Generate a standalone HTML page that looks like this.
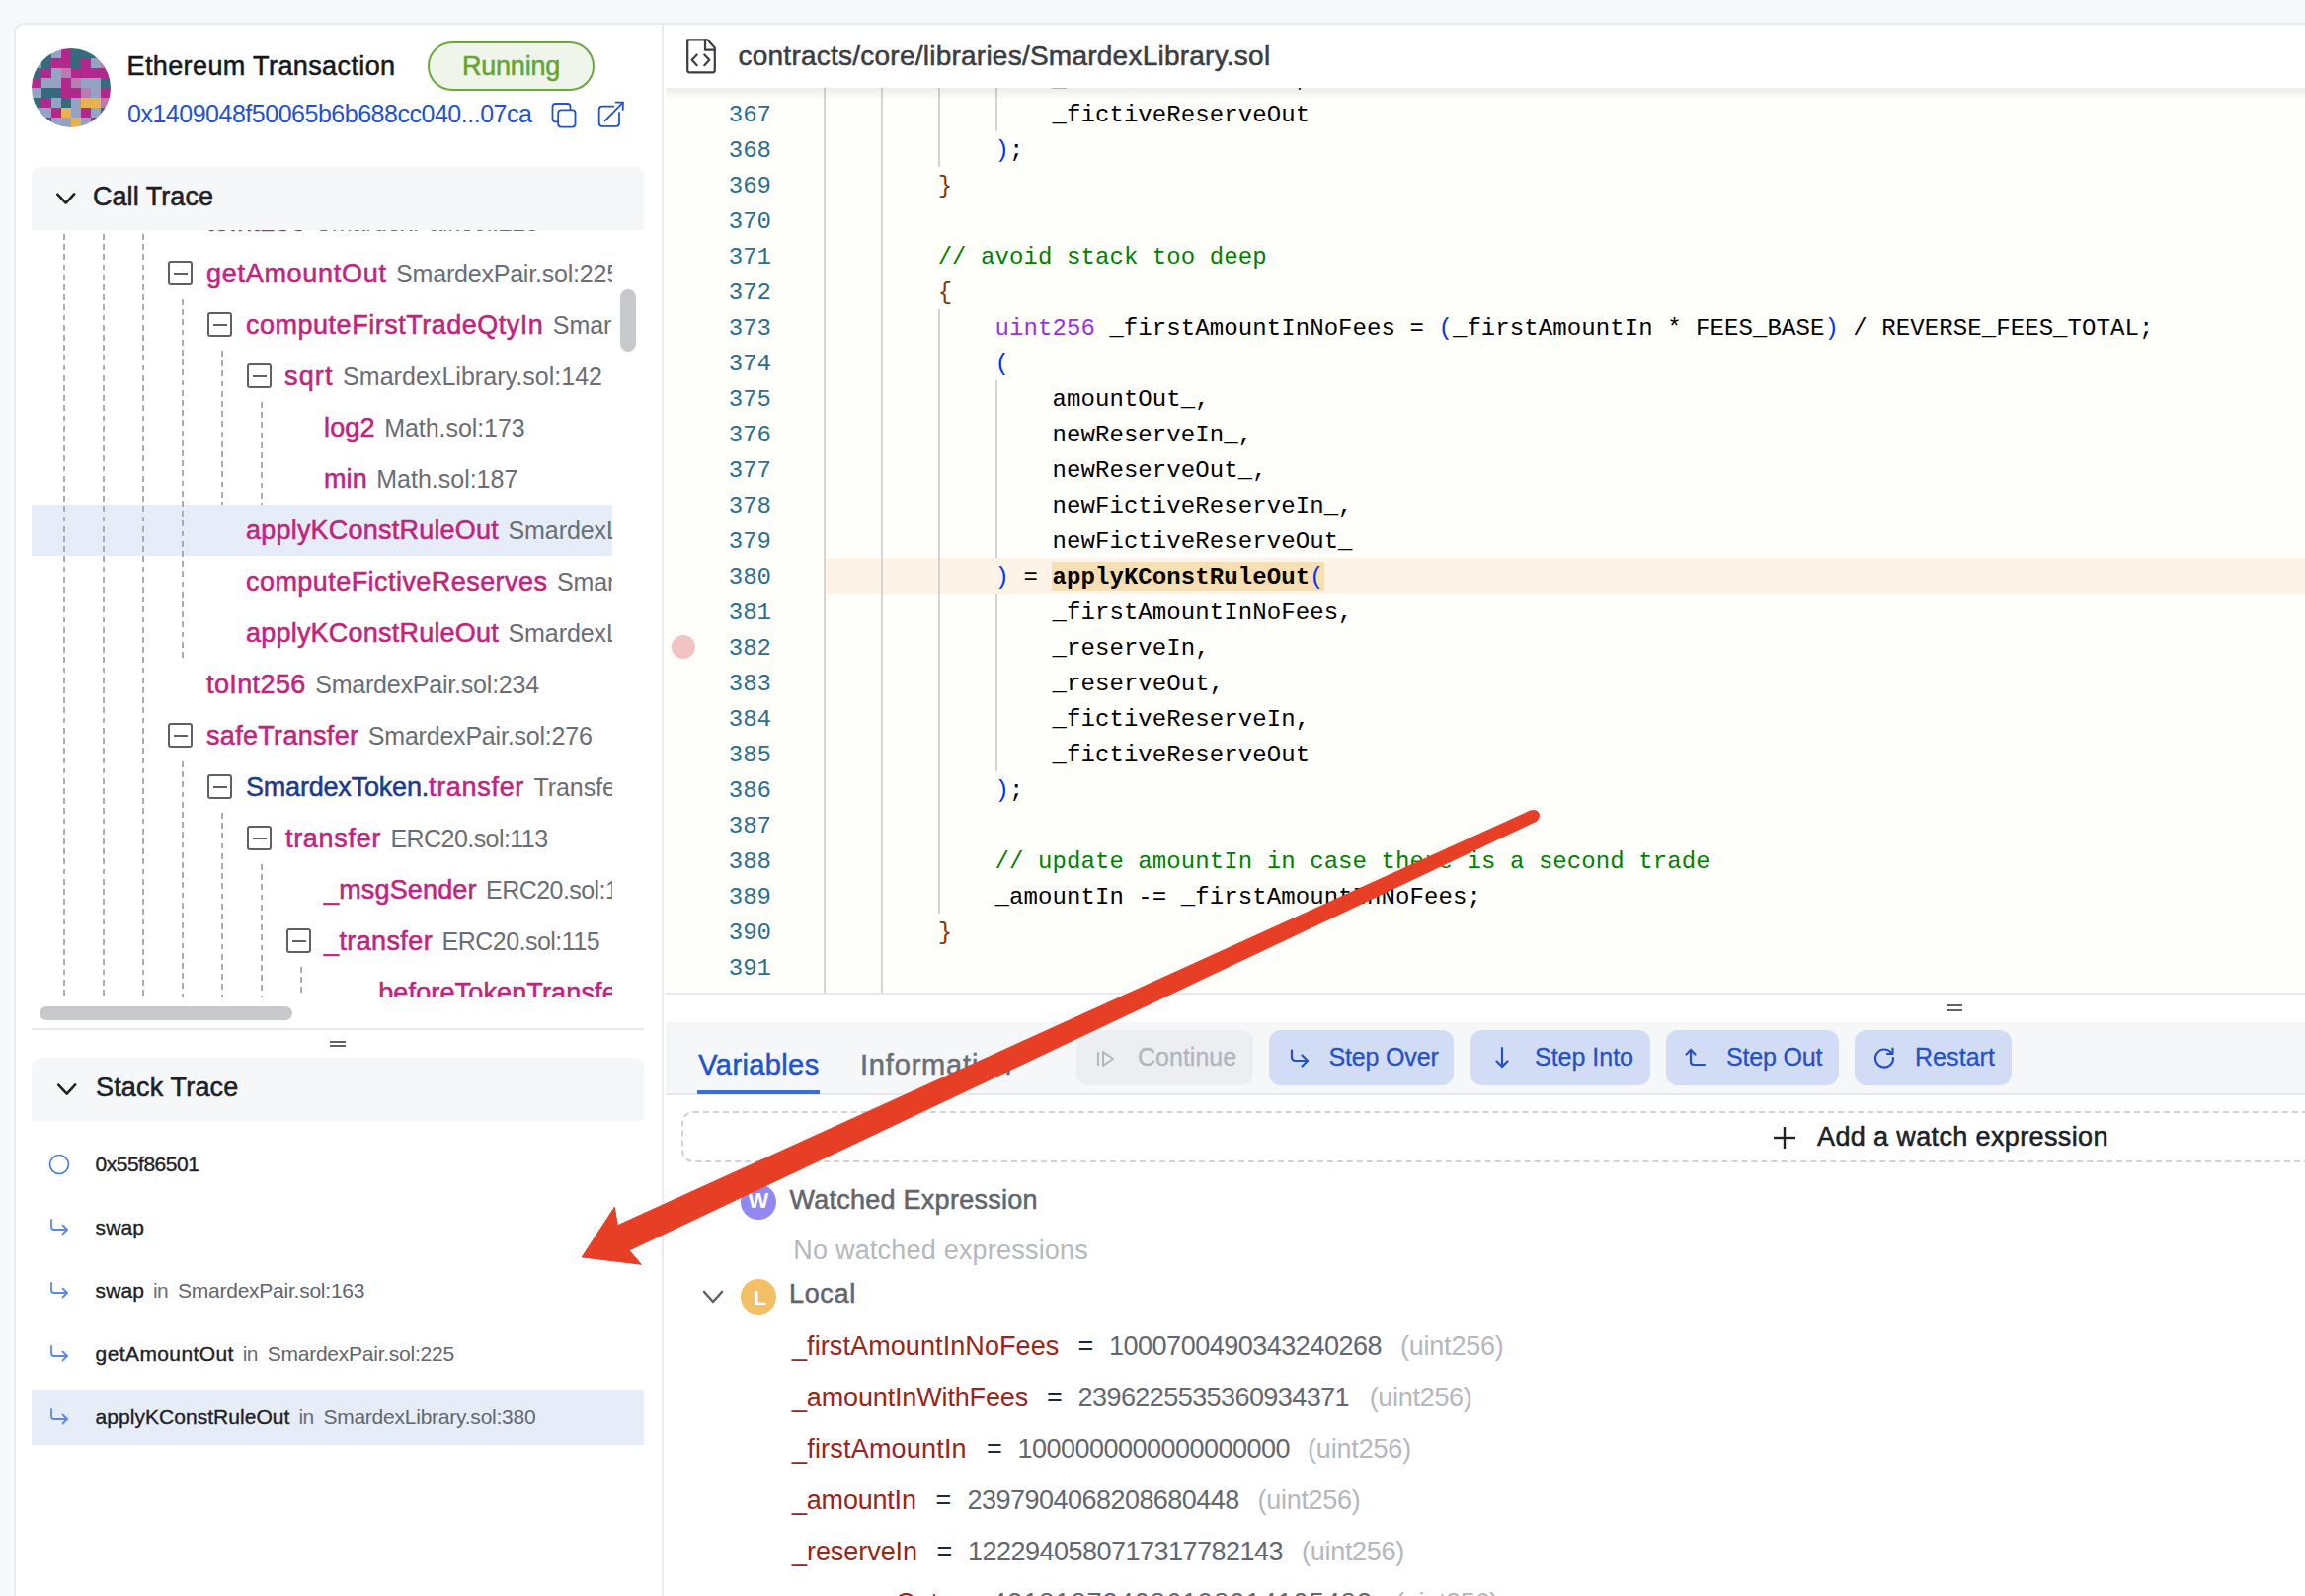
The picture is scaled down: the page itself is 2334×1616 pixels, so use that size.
<!DOCTYPE html><html><head><meta charset="utf-8"><title>Debugger</title><style>html,body{margin:0;padding:0;}body{width:2334px;height:1616px;overflow:hidden;position:relative;background:#f7f8fa;font-family:"Liberation Sans",sans-serif;}</style></head><body>
<div style="position:absolute;left:14px;top:23px;width:2400px;height:1700px;background:#ffffff;border:2px solid #e8ebf0;border-radius:10px;box-sizing:border-box;"></div>
<svg style="position:absolute;left:32px;top:49px" width="80" height="80" viewBox="0 0 80 80"><defs><clipPath id="av"><circle cx="40" cy="40" r="40"/></clipPath></defs><g clip-path="url(#av)"><rect x="0" y="0" width="10.5" height="10.5" fill="#94a3c4"/><rect x="10" y="0" width="10.5" height="10.5" fill="#356b7c"/><rect x="20" y="0" width="10.5" height="10.5" fill="#94a3c4"/><rect x="30" y="0" width="10.5" height="10.5" fill="#b3288c"/><rect x="40" y="0" width="10.5" height="10.5" fill="#356b7c"/><rect x="50" y="0" width="10.5" height="10.5" fill="#356b7c"/><rect x="60" y="0" width="10.5" height="10.5" fill="#356b7c"/><rect x="70" y="0" width="10.5" height="10.5" fill="#b97bb2"/><rect x="0" y="10" width="10.5" height="10.5" fill="#94a3c4"/><rect x="10" y="10" width="10.5" height="10.5" fill="#356b7c"/><rect x="20" y="10" width="10.5" height="10.5" fill="#b3288c"/><rect x="30" y="10" width="10.5" height="10.5" fill="#b3288c"/><rect x="40" y="10" width="10.5" height="10.5" fill="#356b7c"/><rect x="50" y="10" width="10.5" height="10.5" fill="#b3288c"/><rect x="60" y="10" width="10.5" height="10.5" fill="#94a3c4"/><rect x="70" y="10" width="10.5" height="10.5" fill="#b97bb2"/><rect x="0" y="20" width="10.5" height="10.5" fill="#356b7c"/><rect x="10" y="20" width="10.5" height="10.5" fill="#b3288c"/><rect x="20" y="20" width="10.5" height="10.5" fill="#94a3c4"/><rect x="30" y="20" width="10.5" height="10.5" fill="#b97bb2"/><rect x="40" y="20" width="10.5" height="10.5" fill="#b3288c"/><rect x="50" y="20" width="10.5" height="10.5" fill="#b3288c"/><rect x="60" y="20" width="10.5" height="10.5" fill="#b3288c"/><rect x="70" y="20" width="10.5" height="10.5" fill="#b3288c"/><rect x="0" y="30" width="10.5" height="10.5" fill="#b3288c"/><rect x="10" y="30" width="10.5" height="10.5" fill="#94a3c4"/><rect x="20" y="30" width="10.5" height="10.5" fill="#94a3c4"/><rect x="30" y="30" width="10.5" height="10.5" fill="#b3288c"/><rect x="40" y="30" width="10.5" height="10.5" fill="#b97bb2"/><rect x="50" y="30" width="10.5" height="10.5" fill="#94a3c4"/><rect x="60" y="30" width="10.5" height="10.5" fill="#94a3c4"/><rect x="70" y="30" width="10.5" height="10.5" fill="#356b7c"/><rect x="0" y="40" width="10.5" height="10.5" fill="#94a3c4"/><rect x="10" y="40" width="10.5" height="10.5" fill="#356b7c"/><rect x="20" y="40" width="10.5" height="10.5" fill="#356b7c"/><rect x="30" y="40" width="10.5" height="10.5" fill="#b3288c"/><rect x="40" y="40" width="10.5" height="10.5" fill="#b3288c"/><rect x="50" y="40" width="10.5" height="10.5" fill="#b97bb2"/><rect x="60" y="40" width="10.5" height="10.5" fill="#94a3c4"/><rect x="70" y="40" width="10.5" height="10.5" fill="#b3288c"/><rect x="0" y="50" width="10.5" height="10.5" fill="#356b7c"/><rect x="10" y="50" width="10.5" height="10.5" fill="#b3288c"/><rect x="20" y="50" width="10.5" height="10.5" fill="#94a3c4"/><rect x="30" y="50" width="10.5" height="10.5" fill="#356b7c"/><rect x="40" y="50" width="10.5" height="10.5" fill="#94a3c4"/><rect x="50" y="50" width="10.5" height="10.5" fill="#e8b04f"/><rect x="60" y="50" width="10.5" height="10.5" fill="#e8b04f"/><rect x="70" y="50" width="10.5" height="10.5" fill="#b97bb2"/><rect x="0" y="60" width="10.5" height="10.5" fill="#94a3c4"/><rect x="10" y="60" width="10.5" height="10.5" fill="#94a3c4"/><rect x="20" y="60" width="10.5" height="10.5" fill="#b3288c"/><rect x="30" y="60" width="10.5" height="10.5" fill="#e8b04f"/><rect x="40" y="60" width="10.5" height="10.5" fill="#94a3c4"/><rect x="50" y="60" width="10.5" height="10.5" fill="#b3288c"/><rect x="60" y="60" width="10.5" height="10.5" fill="#94a3c4"/><rect x="70" y="60" width="10.5" height="10.5" fill="#356b7c"/><rect x="0" y="70" width="10.5" height="10.5" fill="#94a3c4"/><rect x="10" y="70" width="10.5" height="10.5" fill="#356b7c"/><rect x="20" y="70" width="10.5" height="10.5" fill="#94a3c4"/><rect x="30" y="70" width="10.5" height="10.5" fill="#94a3c4"/><rect x="40" y="70" width="10.5" height="10.5" fill="#e8b04f"/><rect x="50" y="70" width="10.5" height="10.5" fill="#94a3c4"/><rect x="60" y="70" width="10.5" height="10.5" fill="#b3288c"/><rect x="70" y="70" width="10.5" height="10.5" fill="#94a3c4"/></g></svg>
<div style="position:absolute;left:128.50px;top:49.64px;font-size:27px;line-height:34px;font-family:'Liberation Sans', sans-serif;font-weight:400;color:#16181b;white-space:pre;-webkit-text-stroke:0.55px #16181b;letter-spacing:0.394px;">Ethereum Transaction</div>
<div style="position:absolute;left:433px;top:42px;width:169px;height:50px;box-sizing:border-box;border:2px solid #6ba93c;border-radius:25px;background:#eff5ea;"></div>
<div style="position:absolute;left:468.00px;top:49.64px;font-size:27px;line-height:34px;font-family:'Liberation Sans', sans-serif;font-weight:400;color:#65a632;white-space:pre;-webkit-text-stroke:0.55px #65a632;letter-spacing:-0.225px;">Running</div>
<div style="position:absolute;left:129.00px;top:99.03px;font-size:25px;line-height:32px;font-family:'Liberation Sans', sans-serif;font-weight:400;color:#2152d2;white-space:pre;letter-spacing:-0.484px;">0x1409048f50065b6b688cc040...07ca</div>
<svg style="position:absolute;left:557px;top:103px" width="30" height="30" viewBox="0 0 30 30" fill="none" stroke="#2152d2" stroke-width="1.8" stroke-linejoin="round"><path d="M8.2 20.3 H5.5 Q2.5 20.3 2.5 17.3 V5 Q2.5 2 5.5 2 H17.5 Q20.5 2 20.5 5 V8.3"/><rect x="8.2" y="8.3" width="17.3" height="17.3" rx="3"/></svg>
<svg style="position:absolute;left:604px;top:101px" width="30" height="30" viewBox="0 0 30 30" fill="none" stroke="#2152d2" stroke-width="1.8" stroke-linecap="round" stroke-linejoin="round"><path d="M17.3 6.7 H5.7 Q2.7 6.7 2.7 9.7 V23.8 Q2.7 26.8 5.7 26.8 H20 Q23 26.8 23 23.8 V13"/><path d="M8.6 21.3 L26.8 2.6"/><path d="M19.5 2.6 H26.8 V10.1"/></svg>
<div style="position:absolute;left:32px;top:169px;width:620px;height:64px;background:#f6f7f9;border-radius:9px 9px 0 0;"></div>
<svg style="position:absolute;left:55px;top:192px" width="24" height="18" viewBox="0 0 24 18" fill="none" stroke="#1d2025" stroke-width="2.6" stroke-linecap="round" stroke-linejoin="round"><path d="M3.2 4.6 L11.7 13.6 L20.2 4.4"/></svg>
<div style="position:absolute;left:94.00px;top:181.64px;font-size:27px;line-height:34px;font-family:'Liberation Sans', sans-serif;font-weight:400;color:#1d2025;white-space:pre;-webkit-text-stroke:0.55px #1d2025;letter-spacing:0.045px;">Call Trace</div>
<div style="position:absolute;left:32px;top:233px;width:588px;height:777px;overflow:hidden;">
<div style="position:absolute;left:0px;top:278px;width:588px;height:52px;background:#e7edf8;"></div>
<div style="position:absolute;left:32px;top:4px;width:2px;height:773px;background:repeating-linear-gradient(to bottom,#aaaeb4 0px,#aaaeb4 5.8px,transparent 5.8px,transparent 10.2px);"></div>
<div style="position:absolute;left:72px;top:4px;width:2px;height:773px;background:repeating-linear-gradient(to bottom,#aaaeb4 0px,#aaaeb4 5.8px,transparent 5.8px,transparent 10.2px);"></div>
<div style="position:absolute;left:112px;top:4px;width:2px;height:773px;background:repeating-linear-gradient(to bottom,#aaaeb4 0px,#aaaeb4 5.8px,transparent 5.8px,transparent 10.2px);"></div>
<div style="position:absolute;left:152px;top:70px;width:2px;height:364px;background:repeating-linear-gradient(to bottom,#aaaeb4 0px,#aaaeb4 5.8px,transparent 5.8px,transparent 10.2px);"></div>
<div style="position:absolute;left:152px;top:538px;width:2px;height:239px;background:repeating-linear-gradient(to bottom,#aaaeb4 0px,#aaaeb4 5.8px,transparent 5.8px,transparent 10.2px);"></div>
<div style="position:absolute;left:192px;top:122px;width:2px;height:156px;background:repeating-linear-gradient(to bottom,#aaaeb4 0px,#aaaeb4 5.8px,transparent 5.8px,transparent 10.2px);"></div>
<div style="position:absolute;left:192px;top:590px;width:2px;height:187px;background:repeating-linear-gradient(to bottom,#aaaeb4 0px,#aaaeb4 5.8px,transparent 5.8px,transparent 10.2px);"></div>
<div style="position:absolute;left:232px;top:174px;width:2px;height:104px;background:repeating-linear-gradient(to bottom,#aaaeb4 0px,#aaaeb4 5.8px,transparent 5.8px,transparent 10.2px);"></div>
<div style="position:absolute;left:232px;top:642px;width:2px;height:135px;background:repeating-linear-gradient(to bottom,#aaaeb4 0px,#aaaeb4 5.8px,transparent 5.8px,transparent 10.2px);"></div>
<div style="position:absolute;left:272px;top:746px;width:2px;height:31px;background:repeating-linear-gradient(to bottom,#aaaeb4 0px,#aaaeb4 5.8px,transparent 5.8px,transparent 10.2px);"></div>
<div style="position:absolute;left:177.00px;top:-25.36px;font-size:27px;line-height:34px;font-family:'Liberation Sans', sans-serif;font-weight:400;color:#c2237f;white-space:pre;-webkit-text-stroke:0.55px #c2237f;letter-spacing:0.390px;">toInt256</div>
<div style="position:absolute;left:287.20px;top:-23.67px;font-size:25px;line-height:32px;font-family:'Liberation Sans', sans-serif;font-weight:400;color:#6a6d74;white-space:pre;letter-spacing:-0.205px;">SmardexPair.sol:225</div>
<div style="position:absolute;left:138px;top:31px;width:25px;height:25px;box-sizing:border-box;border:2px solid #5d6167;border-radius:3px;"></div>
<div style="position:absolute;left:143.5px;top:42.5px;width:14px;height:2px;background:#5d6167;"></div>
<div style="position:absolute;left:177.00px;top:26.64px;font-size:27px;line-height:34px;font-family:'Liberation Sans', sans-serif;font-weight:400;color:#c2237f;white-space:pre;-webkit-text-stroke:0.55px #c2237f;letter-spacing:0.709px;">getAmountOut</div>
<div style="position:absolute;left:369.10px;top:28.33px;font-size:25px;line-height:32px;font-family:'Liberation Sans', sans-serif;font-weight:400;color:#6a6d74;white-space:pre;letter-spacing:-0.205px;">SmardexPair.sol:225</div>
<div style="position:absolute;left:178px;top:83px;width:25px;height:25px;box-sizing:border-box;border:2px solid #5d6167;border-radius:3px;"></div>
<div style="position:absolute;left:183.5px;top:94.5px;width:14px;height:2px;background:#5d6167;"></div>
<div style="position:absolute;left:217.00px;top:78.64px;font-size:27px;line-height:34px;font-family:'Liberation Sans', sans-serif;font-weight:400;color:#c2237f;white-space:pre;-webkit-text-stroke:0.55px #c2237f;letter-spacing:0.510px;">computeFirstTradeQtyIn</div>
<div style="position:absolute;left:527.80px;top:80.33px;font-size:25px;line-height:32px;font-family:'Liberation Sans', sans-serif;font-weight:400;color:#6a6d74;white-space:pre;letter-spacing:-0.077px;">SmardexLibrary.sol:96</div>
<div style="position:absolute;left:218px;top:135px;width:25px;height:25px;box-sizing:border-box;border:2px solid #5d6167;border-radius:3px;"></div>
<div style="position:absolute;left:223.5px;top:146.5px;width:14px;height:2px;background:#5d6167;"></div>
<div style="position:absolute;left:256.00px;top:130.64px;font-size:27px;line-height:34px;font-family:'Liberation Sans', sans-serif;font-weight:400;color:#c2237f;white-space:pre;-webkit-text-stroke:0.55px #c2237f;letter-spacing:1.150px;">sqrt</div>
<div style="position:absolute;left:315.10px;top:132.33px;font-size:25px;line-height:32px;font-family:'Liberation Sans', sans-serif;font-weight:400;color:#6a6d74;white-space:pre;letter-spacing:0.037px;">SmardexLibrary.sol:142</div>
<div style="position:absolute;left:296.00px;top:182.64px;font-size:27px;line-height:34px;font-family:'Liberation Sans', sans-serif;font-weight:400;color:#c2237f;white-space:pre;-webkit-text-stroke:0.55px #c2237f;letter-spacing:0.163px;">log2</div>
<div style="position:absolute;left:357.20px;top:184.33px;font-size:25px;line-height:32px;font-family:'Liberation Sans', sans-serif;font-weight:400;color:#6a6d74;white-space:pre;letter-spacing:-0.056px;">Math.sol:173</div>
<div style="position:absolute;left:296.00px;top:234.64px;font-size:27px;line-height:34px;font-family:'Liberation Sans', sans-serif;font-weight:400;color:#c2237f;white-space:pre;-webkit-text-stroke:0.55px #c2237f;letter-spacing:0.100px;">min</div>
<div style="position:absolute;left:349.30px;top:236.33px;font-size:25px;line-height:32px;font-family:'Liberation Sans', sans-serif;font-weight:400;color:#6a6d74;white-space:pre;letter-spacing:-0.014px;">Math.sol:187</div>
<div style="position:absolute;left:217.00px;top:286.64px;font-size:27px;line-height:34px;font-family:'Liberation Sans', sans-serif;font-weight:400;color:#c2237f;white-space:pre;-webkit-text-stroke:0.55px #c2237f;letter-spacing:0.214px;">applyKConstRuleOut</div>
<div style="position:absolute;left:482.50px;top:288.33px;font-size:25px;line-height:32px;font-family:'Liberation Sans', sans-serif;font-weight:400;color:#6a6d74;white-space:pre;letter-spacing:-0.078px;">SmardexLibrary.sol:380</div>
<div style="position:absolute;left:217.00px;top:338.64px;font-size:27px;line-height:34px;font-family:'Liberation Sans', sans-serif;font-weight:400;color:#c2237f;white-space:pre;-webkit-text-stroke:0.55px #c2237f;letter-spacing:0.446px;">computeFictiveReserves</div>
<div style="position:absolute;left:531.90px;top:340.33px;font-size:25px;line-height:32px;font-family:'Liberation Sans', sans-serif;font-weight:400;color:#6a6d74;white-space:pre;letter-spacing:-0.078px;">SmardexLibrary.sol:402</div>
<div style="position:absolute;left:217.00px;top:390.64px;font-size:27px;line-height:34px;font-family:'Liberation Sans', sans-serif;font-weight:400;color:#c2237f;white-space:pre;-webkit-text-stroke:0.55px #c2237f;letter-spacing:0.214px;">applyKConstRuleOut</div>
<div style="position:absolute;left:482.50px;top:392.33px;font-size:25px;line-height:32px;font-family:'Liberation Sans', sans-serif;font-weight:400;color:#6a6d74;white-space:pre;letter-spacing:-0.078px;">SmardexLibrary.sol:406</div>
<div style="position:absolute;left:177.00px;top:442.64px;font-size:27px;line-height:34px;font-family:'Liberation Sans', sans-serif;font-weight:400;color:#c2237f;white-space:pre;-webkit-text-stroke:0.55px #c2237f;letter-spacing:0.390px;">toInt256</div>
<div style="position:absolute;left:287.20px;top:444.33px;font-size:25px;line-height:32px;font-family:'Liberation Sans', sans-serif;font-weight:400;color:#6a6d74;white-space:pre;letter-spacing:-0.205px;">SmardexPair.sol:234</div>
<div style="position:absolute;left:138px;top:499px;width:25px;height:25px;box-sizing:border-box;border:2px solid #5d6167;border-radius:3px;"></div>
<div style="position:absolute;left:143.5px;top:510.5px;width:14px;height:2px;background:#5d6167;"></div>
<div style="position:absolute;left:177.00px;top:494.64px;font-size:27px;line-height:34px;font-family:'Liberation Sans', sans-serif;font-weight:400;color:#c2237f;white-space:pre;-webkit-text-stroke:0.55px #c2237f;letter-spacing:0.313px;">safeTransfer</div>
<div style="position:absolute;left:340.80px;top:496.33px;font-size:25px;line-height:32px;font-family:'Liberation Sans', sans-serif;font-weight:400;color:#6a6d74;white-space:pre;letter-spacing:-0.205px;">SmardexPair.sol:276</div>
<div style="position:absolute;left:178px;top:551px;width:25px;height:25px;box-sizing:border-box;border:2px solid #5d6167;border-radius:3px;"></div>
<div style="position:absolute;left:183.5px;top:562.5px;width:14px;height:2px;background:#5d6167;"></div>
<div style="position:absolute;left:217.00px;top:546.64px;font-size:27px;line-height:34px;font-family:'Liberation Sans', sans-serif;font-weight:400;color:#1b3b8f;white-space:pre;-webkit-text-stroke:0.55px #1b3b8f;letter-spacing:-0.198px;">SmardexToken.</div>
<div style="position:absolute;left:402.00px;top:546.64px;font-size:27px;line-height:34px;font-family:'Liberation Sans', sans-serif;font-weight:400;color:#c2237f;white-space:pre;-webkit-text-stroke:0.55px #c2237f;letter-spacing:0.686px;">transfer</div>
<div style="position:absolute;left:508.50px;top:548.33px;font-size:25px;line-height:32px;font-family:'Liberation Sans', sans-serif;font-weight:400;color:#6a6d74;white-space:pre;letter-spacing:-0.075px;">TransferHelper.sol:50</div>
<div style="position:absolute;left:218px;top:603px;width:25px;height:25px;box-sizing:border-box;border:2px solid #5d6167;border-radius:3px;"></div>
<div style="position:absolute;left:223.5px;top:614.5px;width:14px;height:2px;background:#5d6167;"></div>
<div style="position:absolute;left:257.00px;top:598.64px;font-size:27px;line-height:34px;font-family:'Liberation Sans', sans-serif;font-weight:400;color:#c2237f;white-space:pre;-webkit-text-stroke:0.55px #c2237f;letter-spacing:0.686px;">transfer</div>
<div style="position:absolute;left:363.50px;top:600.33px;font-size:25px;line-height:32px;font-family:'Liberation Sans', sans-serif;font-weight:400;color:#6a6d74;white-space:pre;letter-spacing:-0.561px;">ERC20.sol:113</div>
<div style="position:absolute;left:296.00px;top:650.64px;font-size:27px;line-height:34px;font-family:'Liberation Sans', sans-serif;font-weight:400;color:#c2237f;white-space:pre;-webkit-text-stroke:0.55px #c2237f;letter-spacing:0.152px;">_msgSender</div>
<div style="position:absolute;left:460.10px;top:652.33px;font-size:25px;line-height:32px;font-family:'Liberation Sans', sans-serif;font-weight:400;color:#6a6d74;white-space:pre;letter-spacing:-0.561px;">ERC20.sol:114</div>
<div style="position:absolute;left:258px;top:707px;width:25px;height:25px;box-sizing:border-box;border:2px solid #5d6167;border-radius:3px;"></div>
<div style="position:absolute;left:263.5px;top:718.5px;width:14px;height:2px;background:#5d6167;"></div>
<div style="position:absolute;left:296.00px;top:702.64px;font-size:27px;line-height:34px;font-family:'Liberation Sans', sans-serif;font-weight:400;color:#c2237f;white-space:pre;-webkit-text-stroke:0.55px #c2237f;letter-spacing:0.385px;">_transfer</div>
<div style="position:absolute;left:415.50px;top:704.33px;font-size:25px;line-height:32px;font-family:'Liberation Sans', sans-serif;font-weight:400;color:#6a6d74;white-space:pre;letter-spacing:-0.515px;">ERC20.sol:115</div>
<div style="position:absolute;left:336.00px;top:754.64px;font-size:27px;line-height:34px;font-family:'Liberation Sans', sans-serif;font-weight:400;color:#c2237f;white-space:pre;-webkit-text-stroke:0.55px #c2237f;letter-spacing:0.144px;">_beforeTokenTransfer</div>
<div style="position:absolute;left:611.50px;top:756.33px;font-size:25px;line-height:32px;font-family:'Liberation Sans', sans-serif;font-weight:400;color:#6a6d74;white-space:pre;letter-spacing:-0.085px;">ERC20.sol:226</div>
</div>
<div style="position:absolute;left:628px;top:293px;width:16px;height:63px;background:#c8c9cc;border-radius:8px;"></div>
<div style="position:absolute;left:40px;top:1019px;width:256px;height:14px;background:#c8c9cc;border-radius:7px;"></div>
<div style="position:absolute;left:32px;top:1041px;width:620px;height:2px;background:#e6e9ee;"></div>
<div style="position:absolute;left:334px;top:1054px;width:16px;height:2px;background:#5f6368;"></div>
<div style="position:absolute;left:334px;top:1058px;width:16px;height:2px;background:#5f6368;"></div>
<div style="position:absolute;left:32px;top:1071px;width:620px;height:64px;background:#f6f7f9;border-radius:9px 9px 0 0;"></div>
<svg style="position:absolute;left:56px;top:1094px" width="24" height="18" viewBox="0 0 24 18" fill="none" stroke="#1d2025" stroke-width="2.6" stroke-linecap="round" stroke-linejoin="round"><path d="M3.2 4.6 L11.7 13.6 L20.2 4.4"/></svg>
<div style="position:absolute;left:97.00px;top:1083.64px;font-size:27px;line-height:34px;font-family:'Liberation Sans', sans-serif;font-weight:400;color:#1d2025;white-space:pre;-webkit-text-stroke:0.55px #1d2025;letter-spacing:0.176px;">Stack Trace</div>
<div style="position:absolute;left:32px;top:1407px;width:620px;height:56px;background:#e7edf8;"></div>
<svg style="position:absolute;left:48px;top:1167px" width="24" height="24" viewBox="0 0 24 24" fill="none" stroke="#4f82de" stroke-width="1.7"><circle cx="12" cy="12" r="9.5"/></svg>
<div style="position:absolute;left:96.60px;top:1165.22px;font-size:21px;line-height:27px;font-family:'Liberation Sans', sans-serif;font-weight:400;color:#1d2025;white-space:pre;-webkit-text-stroke:0.35px #1d2025;letter-spacing:-0.506px;">0x55f86501</div>
<svg style="position:absolute;left:49px;top:1233px" width="22" height="22" viewBox="0 0 22 22" fill="none" stroke="#5b8ae0" stroke-width="1.8" stroke-linecap="round" stroke-linejoin="round"><path d="M3 2 V9 Q3 12 6 12 H19"/><path d="M14.5 7.5 L19 12 L14.5 16.5"/></svg>
<div style="position:absolute;left:96.60px;top:1229.22px;font-size:21px;line-height:27px;font-family:'Liberation Sans', sans-serif;font-weight:400;color:#1d2025;white-space:pre;-webkit-text-stroke:0.35px #1d2025;letter-spacing:0.096px;">swap</div>
<svg style="position:absolute;left:49px;top:1297px" width="22" height="22" viewBox="0 0 22 22" fill="none" stroke="#5b8ae0" stroke-width="1.8" stroke-linecap="round" stroke-linejoin="round"><path d="M3 2 V9 Q3 12 6 12 H19"/><path d="M14.5 7.5 L19 12 L14.5 16.5"/></svg>
<div style="position:absolute;left:96.60px;top:1293.22px;font-size:21px;line-height:27px;font-family:'Liberation Sans', sans-serif;font-weight:400;color:#1d2025;white-space:pre;-webkit-text-stroke:0.35px #1d2025;letter-spacing:0.096px;">swap</div>
<div style="position:absolute;left:155.00px;top:1293.22px;font-size:21px;line-height:27px;font-family:'Liberation Sans', sans-serif;font-weight:400;color:#6a6d74;white-space:pre;letter-spacing:-0.672px;">in</div>
<div style="position:absolute;left:180.00px;top:1293.22px;font-size:21px;line-height:27px;font-family:'Liberation Sans', sans-serif;font-weight:400;color:#62666d;white-space:pre;letter-spacing:-0.240px;">SmardexPair.sol:163</div>
<svg style="position:absolute;left:49px;top:1360.5px" width="22" height="22" viewBox="0 0 22 22" fill="none" stroke="#5b8ae0" stroke-width="1.8" stroke-linecap="round" stroke-linejoin="round"><path d="M3 2 V9 Q3 12 6 12 H19"/><path d="M14.5 7.5 L19 12 L14.5 16.5"/></svg>
<div style="position:absolute;left:96.60px;top:1356.72px;font-size:21px;line-height:27px;font-family:'Liberation Sans', sans-serif;font-weight:400;color:#1d2025;white-space:pre;-webkit-text-stroke:0.35px #1d2025;letter-spacing:0.396px;">getAmountOut</div>
<div style="position:absolute;left:245.70px;top:1356.72px;font-size:21px;line-height:27px;font-family:'Liberation Sans', sans-serif;font-weight:400;color:#6a6d74;white-space:pre;letter-spacing:-0.672px;">in</div>
<div style="position:absolute;left:270.70px;top:1356.72px;font-size:21px;line-height:27px;font-family:'Liberation Sans', sans-serif;font-weight:400;color:#62666d;white-space:pre;letter-spacing:-0.240px;">SmardexPair.sol:225</div>
<svg style="position:absolute;left:49px;top:1424.5px" width="22" height="22" viewBox="0 0 22 22" fill="none" stroke="#5b8ae0" stroke-width="1.8" stroke-linecap="round" stroke-linejoin="round"><path d="M3 2 V9 Q3 12 6 12 H19"/><path d="M14.5 7.5 L19 12 L14.5 16.5"/></svg>
<div style="position:absolute;left:96.60px;top:1420.72px;font-size:21px;line-height:27px;font-family:'Liberation Sans', sans-serif;font-weight:400;color:#1d2025;white-space:pre;-webkit-text-stroke:0.35px #1d2025;letter-spacing:0.042px;">applyKConstRuleOut</div>
<div style="position:absolute;left:302.40px;top:1420.72px;font-size:21px;line-height:27px;font-family:'Liberation Sans', sans-serif;font-weight:400;color:#6a6d74;white-space:pre;letter-spacing:-0.672px;">in</div>
<div style="position:absolute;left:327.40px;top:1420.72px;font-size:21px;line-height:27px;font-family:'Liberation Sans', sans-serif;font-weight:400;color:#62666d;white-space:pre;letter-spacing:-0.235px;">SmardexLibrary.sol:380</div>
<div style="position:absolute;left:670px;top:24px;width:2px;height:1616px;background:#e6e9ee;"></div>
<svg style="position:absolute;left:692px;top:37px" width="36" height="40" viewBox="0 0 36 40" fill="none" stroke="#3a3d43" stroke-width="2.2" stroke-linejoin="round" stroke-linecap="round"><path d="M4.2 3.3 H24.4 L31.8 11.6 V34.3 Q31.8 36.3 29.8 36.3 H6.2 Q4.2 36.3 4.2 34.3 Z"/><path d="M22 3.3 V13.7 H31.8"/><path d="M13.7 18.5 L8.7 23.7 L13.7 29.2"/><path d="M21.3 18.5 L26.3 23.7 L21.3 29.2"/></svg>
<div style="position:absolute;left:747.50px;top:38.79px;font-size:28px;line-height:35px;font-family:'Liberation Sans', sans-serif;font-weight:400;color:#3a3d43;white-space:pre;-webkit-text-stroke:0.55px #3a3d43;letter-spacing:0.240px;">contracts/core/libraries/SmardexLibrary.sol</div>
<div style="position:absolute;left:674px;top:89px;width:1660px;height:916px;background:#fefefb;"></div>
<div style="position:absolute;left:674px;top:89px;width:1660px;height:916px;overflow:hidden;">
<div style="position:absolute;left:159.79999999999995px;top:476.0px;width:1700px;height:36px;background:#fdf4e7;"></div>
<div style="position:absolute;left:391.48px;top:479.5px;width:275.12px;height:29px;background:#f8dfb1;"></div>
<div style="position:absolute;left:159.79999999999995px;top:-244.0px;width:2px;height:1296px;background:#d4d4d4;"></div>
<div style="position:absolute;left:217.7199999999999px;top:-244.0px;width:2px;height:1296px;background:#d4d4d4;"></div>
<div style="position:absolute;left:275.64px;top:-244.0px;width:2px;height:324px;background:#d4d4d4;"></div>
<div style="position:absolute;left:275.64px;top:224.0px;width:2px;height:612px;background:#d4d4d4;"></div>
<div style="position:absolute;left:333.55999999999995px;top:-244.0px;width:2px;height:288px;background:#d4d4d4;"></div>
<div style="position:absolute;left:333.55999999999995px;top:296.0px;width:2px;height:180px;background:#d4d4d4;"></div>
<div style="position:absolute;left:333.55999999999995px;top:512.0px;width:2px;height:180px;background:#d4d4d4;"></div>
<div style="position:absolute;left:6px;top:554px;width:24px;height:24px;border-radius:12px;background:#f1c3c3;"></div>
<div style="position:absolute;left:391.48px;top:-23.19px;font-size:24px;line-height:30px;font-family:'Liberation Mono', monospace;font-weight:400;color:#000000;white-space:pre;letter-spacing:0.08px;">_fictiveReserveIn,</div>
<div style="position:absolute;left:63.80px;top:12.81px;font-size:24px;line-height:30px;font-family:'Liberation Mono', monospace;font-weight:400;color:#2c6e8c;white-space:pre;">367</div>
<div style="position:absolute;left:391.48px;top:12.81px;font-size:24px;line-height:30px;font-family:'Liberation Mono', monospace;font-weight:400;color:#000000;white-space:pre;letter-spacing:0.08px;">_fictiveReserveOut</div>
<div style="position:absolute;left:63.80px;top:48.81px;font-size:24px;line-height:30px;font-family:'Liberation Mono', monospace;font-weight:400;color:#2c6e8c;white-space:pre;">368</div>
<div style="position:absolute;left:333.56px;top:48.81px;font-size:24px;line-height:30px;font-family:'Liberation Mono', monospace;font-weight:400;color:#0431fa;white-space:pre;letter-spacing:0.08px;">)</div>
<div style="position:absolute;left:348.04px;top:48.81px;font-size:24px;line-height:30px;font-family:'Liberation Mono', monospace;font-weight:400;color:#000000;white-space:pre;letter-spacing:0.08px;">;</div>
<div style="position:absolute;left:63.80px;top:84.81px;font-size:24px;line-height:30px;font-family:'Liberation Mono', monospace;font-weight:400;color:#2c6e8c;white-space:pre;">369</div>
<div style="position:absolute;left:275.64px;top:84.81px;font-size:24px;line-height:30px;font-family:'Liberation Mono', monospace;font-weight:400;color:#7b3814;white-space:pre;letter-spacing:0.08px;">}</div>
<div style="position:absolute;left:63.80px;top:120.81px;font-size:24px;line-height:30px;font-family:'Liberation Mono', monospace;font-weight:400;color:#2c6e8c;white-space:pre;">370</div>
<div style="position:absolute;left:63.80px;top:156.81px;font-size:24px;line-height:30px;font-family:'Liberation Mono', monospace;font-weight:400;color:#2c6e8c;white-space:pre;">371</div>
<div style="position:absolute;left:275.64px;top:156.81px;font-size:24px;line-height:30px;font-family:'Liberation Mono', monospace;font-weight:400;color:#008000;white-space:pre;letter-spacing:0.08px;">// avoid stack too deep</div>
<div style="position:absolute;left:63.80px;top:192.81px;font-size:24px;line-height:30px;font-family:'Liberation Mono', monospace;font-weight:400;color:#2c6e8c;white-space:pre;">372</div>
<div style="position:absolute;left:275.64px;top:192.81px;font-size:24px;line-height:30px;font-family:'Liberation Mono', monospace;font-weight:400;color:#7b3814;white-space:pre;letter-spacing:0.08px;">{</div>
<div style="position:absolute;left:63.80px;top:228.81px;font-size:24px;line-height:30px;font-family:'Liberation Mono', monospace;font-weight:400;color:#2c6e8c;white-space:pre;">373</div>
<div style="position:absolute;left:333.56px;top:228.81px;font-size:24px;line-height:30px;font-family:'Liberation Mono', monospace;font-weight:400;color:#9b30e4;white-space:pre;letter-spacing:0.08px;">uint256</div>
<div style="position:absolute;left:449.40px;top:228.81px;font-size:24px;line-height:30px;font-family:'Liberation Mono', monospace;font-weight:400;color:#000000;white-space:pre;letter-spacing:0.08px;">_firstAmountInNoFees = </div>
<div style="position:absolute;left:782.44px;top:228.81px;font-size:24px;line-height:30px;font-family:'Liberation Mono', monospace;font-weight:400;color:#0431fa;white-space:pre;letter-spacing:0.08px;">(</div>
<div style="position:absolute;left:796.92px;top:228.81px;font-size:24px;line-height:30px;font-family:'Liberation Mono', monospace;font-weight:400;color:#000000;white-space:pre;letter-spacing:0.08px;">_firstAmountIn * FEES_BASE</div>
<div style="position:absolute;left:1173.40px;top:228.81px;font-size:24px;line-height:30px;font-family:'Liberation Mono', monospace;font-weight:400;color:#0431fa;white-space:pre;letter-spacing:0.08px;">)</div>
<div style="position:absolute;left:1187.88px;top:228.81px;font-size:24px;line-height:30px;font-family:'Liberation Mono', monospace;font-weight:400;color:#000000;white-space:pre;letter-spacing:0.08px;"> / REVERSE_FEES_TOTAL;</div>
<div style="position:absolute;left:63.80px;top:264.81px;font-size:24px;line-height:30px;font-family:'Liberation Mono', monospace;font-weight:400;color:#2c6e8c;white-space:pre;">374</div>
<div style="position:absolute;left:333.56px;top:264.81px;font-size:24px;line-height:30px;font-family:'Liberation Mono', monospace;font-weight:400;color:#0431fa;white-space:pre;letter-spacing:0.08px;">(</div>
<div style="position:absolute;left:63.80px;top:300.81px;font-size:24px;line-height:30px;font-family:'Liberation Mono', monospace;font-weight:400;color:#2c6e8c;white-space:pre;">375</div>
<div style="position:absolute;left:391.48px;top:300.81px;font-size:24px;line-height:30px;font-family:'Liberation Mono', monospace;font-weight:400;color:#000000;white-space:pre;letter-spacing:0.08px;">amountOut_,</div>
<div style="position:absolute;left:63.80px;top:336.81px;font-size:24px;line-height:30px;font-family:'Liberation Mono', monospace;font-weight:400;color:#2c6e8c;white-space:pre;">376</div>
<div style="position:absolute;left:391.48px;top:336.81px;font-size:24px;line-height:30px;font-family:'Liberation Mono', monospace;font-weight:400;color:#000000;white-space:pre;letter-spacing:0.08px;">newReserveIn_,</div>
<div style="position:absolute;left:63.80px;top:372.81px;font-size:24px;line-height:30px;font-family:'Liberation Mono', monospace;font-weight:400;color:#2c6e8c;white-space:pre;">377</div>
<div style="position:absolute;left:391.48px;top:372.81px;font-size:24px;line-height:30px;font-family:'Liberation Mono', monospace;font-weight:400;color:#000000;white-space:pre;letter-spacing:0.08px;">newReserveOut_,</div>
<div style="position:absolute;left:63.80px;top:408.81px;font-size:24px;line-height:30px;font-family:'Liberation Mono', monospace;font-weight:400;color:#2c6e8c;white-space:pre;">378</div>
<div style="position:absolute;left:391.48px;top:408.81px;font-size:24px;line-height:30px;font-family:'Liberation Mono', monospace;font-weight:400;color:#000000;white-space:pre;letter-spacing:0.08px;">newFictiveReserveIn_,</div>
<div style="position:absolute;left:63.80px;top:444.81px;font-size:24px;line-height:30px;font-family:'Liberation Mono', monospace;font-weight:400;color:#2c6e8c;white-space:pre;">379</div>
<div style="position:absolute;left:391.48px;top:444.81px;font-size:24px;line-height:30px;font-family:'Liberation Mono', monospace;font-weight:400;color:#000000;white-space:pre;letter-spacing:0.08px;">newFictiveReserveOut_</div>
<div style="position:absolute;left:63.80px;top:480.81px;font-size:24px;line-height:30px;font-family:'Liberation Mono', monospace;font-weight:400;color:#2c6e8c;white-space:pre;">380</div>
<div style="position:absolute;left:333.56px;top:480.81px;font-size:24px;line-height:30px;font-family:'Liberation Mono', monospace;font-weight:400;color:#0431fa;white-space:pre;letter-spacing:0.08px;">)</div>
<div style="position:absolute;left:362.52px;top:480.81px;font-size:24px;line-height:30px;font-family:'Liberation Mono', monospace;font-weight:400;color:#000000;white-space:pre;letter-spacing:0.08px;">=</div>
<div style="position:absolute;left:652.12px;top:480.81px;font-size:24px;line-height:30px;font-family:'Liberation Mono', monospace;font-weight:400;color:#0431fa;white-space:pre;letter-spacing:0.08px;">(</div>
<div style="position:absolute;left:63.80px;top:516.81px;font-size:24px;line-height:30px;font-family:'Liberation Mono', monospace;font-weight:400;color:#2c6e8c;white-space:pre;">381</div>
<div style="position:absolute;left:391.48px;top:516.81px;font-size:24px;line-height:30px;font-family:'Liberation Mono', monospace;font-weight:400;color:#000000;white-space:pre;letter-spacing:0.08px;">_firstAmountInNoFees,</div>
<div style="position:absolute;left:63.80px;top:552.81px;font-size:24px;line-height:30px;font-family:'Liberation Mono', monospace;font-weight:400;color:#2c6e8c;white-space:pre;">382</div>
<div style="position:absolute;left:391.48px;top:552.81px;font-size:24px;line-height:30px;font-family:'Liberation Mono', monospace;font-weight:400;color:#000000;white-space:pre;letter-spacing:0.08px;">_reserveIn,</div>
<div style="position:absolute;left:63.80px;top:588.81px;font-size:24px;line-height:30px;font-family:'Liberation Mono', monospace;font-weight:400;color:#2c6e8c;white-space:pre;">383</div>
<div style="position:absolute;left:391.48px;top:588.81px;font-size:24px;line-height:30px;font-family:'Liberation Mono', monospace;font-weight:400;color:#000000;white-space:pre;letter-spacing:0.08px;">_reserveOut,</div>
<div style="position:absolute;left:63.80px;top:624.81px;font-size:24px;line-height:30px;font-family:'Liberation Mono', monospace;font-weight:400;color:#2c6e8c;white-space:pre;">384</div>
<div style="position:absolute;left:391.48px;top:624.81px;font-size:24px;line-height:30px;font-family:'Liberation Mono', monospace;font-weight:400;color:#000000;white-space:pre;letter-spacing:0.08px;">_fictiveReserveIn,</div>
<div style="position:absolute;left:63.80px;top:660.81px;font-size:24px;line-height:30px;font-family:'Liberation Mono', monospace;font-weight:400;color:#2c6e8c;white-space:pre;">385</div>
<div style="position:absolute;left:391.48px;top:660.81px;font-size:24px;line-height:30px;font-family:'Liberation Mono', monospace;font-weight:400;color:#000000;white-space:pre;letter-spacing:0.08px;">_fictiveReserveOut</div>
<div style="position:absolute;left:63.80px;top:696.81px;font-size:24px;line-height:30px;font-family:'Liberation Mono', monospace;font-weight:400;color:#2c6e8c;white-space:pre;">386</div>
<div style="position:absolute;left:333.56px;top:696.81px;font-size:24px;line-height:30px;font-family:'Liberation Mono', monospace;font-weight:400;color:#0431fa;white-space:pre;letter-spacing:0.08px;">)</div>
<div style="position:absolute;left:348.04px;top:696.81px;font-size:24px;line-height:30px;font-family:'Liberation Mono', monospace;font-weight:400;color:#000000;white-space:pre;letter-spacing:0.08px;">;</div>
<div style="position:absolute;left:63.80px;top:732.81px;font-size:24px;line-height:30px;font-family:'Liberation Mono', monospace;font-weight:400;color:#2c6e8c;white-space:pre;">387</div>
<div style="position:absolute;left:63.80px;top:768.81px;font-size:24px;line-height:30px;font-family:'Liberation Mono', monospace;font-weight:400;color:#2c6e8c;white-space:pre;">388</div>
<div style="position:absolute;left:333.56px;top:768.81px;font-size:24px;line-height:30px;font-family:'Liberation Mono', monospace;font-weight:400;color:#008000;white-space:pre;letter-spacing:0.08px;">// update amountIn in case there is a second trade</div>
<div style="position:absolute;left:63.80px;top:804.81px;font-size:24px;line-height:30px;font-family:'Liberation Mono', monospace;font-weight:400;color:#2c6e8c;white-space:pre;">389</div>
<div style="position:absolute;left:333.56px;top:804.81px;font-size:24px;line-height:30px;font-family:'Liberation Mono', monospace;font-weight:400;color:#000000;white-space:pre;letter-spacing:0.08px;">_amountIn -= _firstAmountInNoFees;</div>
<div style="position:absolute;left:63.80px;top:840.81px;font-size:24px;line-height:30px;font-family:'Liberation Mono', monospace;font-weight:400;color:#2c6e8c;white-space:pre;">390</div>
<div style="position:absolute;left:275.64px;top:840.81px;font-size:24px;line-height:30px;font-family:'Liberation Mono', monospace;font-weight:400;color:#7b3814;white-space:pre;letter-spacing:0.08px;">}</div>
<div style="position:absolute;left:63.80px;top:876.81px;font-size:24px;line-height:30px;font-family:'Liberation Mono', monospace;font-weight:400;color:#2c6e8c;white-space:pre;">391</div>
<div style="position:absolute;left:63.80px;top:912.81px;font-size:24px;line-height:30px;font-family:'Liberation Mono', monospace;font-weight:400;color:#2c6e8c;white-space:pre;">392</div>
<div style="position:absolute;left:333.56px;top:912.81px;font-size:24px;line-height:30px;font-family:'Liberation Mono', monospace;font-weight:400;color:#008000;white-space:pre;letter-spacing:0.08px;">// compute fictive reserves</div>
<div style="position:absolute;left:391.48px;top:480.81px;font-size:24px;line-height:30px;font-family:'Liberation Mono', monospace;font-weight:700;color:#000000;white-space:pre;letter-spacing:0.08px;">applyKConstRuleOut</div>
</div>
<div style="position:absolute;left:674px;top:89px;width:1660px;height:12px;background:linear-gradient(to bottom,rgba(0,0,0,0.07),rgba(0,0,0,0));"></div>
<div style="position:absolute;left:674px;top:1005px;width:1660px;height:2px;background:#e6e9ee;"></div>
<div style="position:absolute;left:1971px;top:1017px;width:16px;height:2px;background:#5f6368;"></div>
<div style="position:absolute;left:1971px;top:1021.5px;width:16px;height:2px;background:#5f6368;"></div>
<div style="position:absolute;left:674px;top:1035px;width:1660px;height:72px;background:#f6f7f9;"></div>
<div style="position:absolute;left:674px;top:1107px;width:1660px;height:2px;background:#e6e9ee;"></div>
<div style="position:absolute;left:707.30px;top:1060.45px;font-size:29px;line-height:37px;font-family:'Liberation Sans', sans-serif;font-weight:400;color:#2352c9;white-space:pre;-webkit-text-stroke:0.55px #2352c9;letter-spacing:0.387px;">Variables</div>
<div style="position:absolute;left:706px;top:1104px;width:124px;height:4px;background:#3b6fd8;"></div>
<div style="position:absolute;left:871.00px;top:1060.45px;font-size:29px;line-height:37px;font-family:'Liberation Sans', sans-serif;font-weight:400;color:#6b6e75;white-space:pre;-webkit-text-stroke:0.55px #6b6e75;letter-spacing:0.814px;">Information</div>
<div style="position:absolute;left:1090px;top:1043px;width:179px;height:56px;background:#eceef2;border-radius:12px;"></div>
<svg style="position:absolute;left:1108px;top:1060px" width="24" height="24" viewBox="0 0 24 24" fill="none" stroke="#b2b5bb" stroke-width="2" stroke-linejoin="round"><path d="M4 5 V19"/><path d="M9 5 L19 12 L9 19 Z"/></svg>
<div style="position:absolute;left:1152.00px;top:1053.93px;font-size:25px;line-height:32px;font-family:'Liberation Sans', sans-serif;font-weight:400;color:#b2b5bb;white-space:pre;-webkit-text-stroke:0.3px #b2b5bb;letter-spacing:0.015px;">Continue</div>
<div style="position:absolute;left:1285px;top:1043px;width:187px;height:56px;background:#d2ddf5;border-radius:12px;"></div>
<svg style="position:absolute;left:1304px;top:1058px" width="24" height="26" viewBox="0 0 24 26" fill="none" stroke="#2351c8" stroke-width="2.2" stroke-linecap="round" stroke-linejoin="round"><path d="M4 5.5 V12 Q4 16 8 16 H20"/><path d="M14.5 10.5 L20 16 L14.5 21.5"/></svg>
<div style="position:absolute;left:1345.50px;top:1053.93px;font-size:25px;line-height:32px;font-family:'Liberation Sans', sans-serif;font-weight:400;color:#2351c8;white-space:pre;-webkit-text-stroke:0.3px #2351c8;letter-spacing:-0.164px;">Step Over</div>
<div style="position:absolute;left:1489px;top:1043px;width:182px;height:56px;background:#d2ddf5;border-radius:12px;"></div>
<svg style="position:absolute;left:1509px;top:1058px" width="24" height="26" viewBox="0 0 24 26" fill="none" stroke="#2351c8" stroke-width="2.2" stroke-linecap="round" stroke-linejoin="round"><path d="M12 3 V22"/><path d="M6.5 16.5 L12 22 L17.5 16.5"/></svg>
<div style="position:absolute;left:1554.00px;top:1053.93px;font-size:25px;line-height:32px;font-family:'Liberation Sans', sans-serif;font-weight:400;color:#2351c8;white-space:pre;-webkit-text-stroke:0.3px #2351c8;letter-spacing:-0.012px;">Step Into</div>
<div style="position:absolute;left:1687px;top:1043px;width:175px;height:56px;background:#d2ddf5;border-radius:12px;"></div>
<svg style="position:absolute;left:1704px;top:1058px" width="26" height="26" viewBox="0 0 26 26" fill="none" stroke="#2351c8" stroke-width="2.2" stroke-linecap="round" stroke-linejoin="round"><path d="M8 5 V17 Q8 20 11 20 H22"/><path d="M3.5 9.5 L8 5 L12.5 9.5"/></svg>
<div style="position:absolute;left:1748.00px;top:1053.93px;font-size:25px;line-height:32px;font-family:'Liberation Sans', sans-serif;font-weight:400;color:#2351c8;white-space:pre;-webkit-text-stroke:0.3px #2351c8;letter-spacing:-0.175px;">Step Out</div>
<div style="position:absolute;left:1878px;top:1043px;width:159px;height:56px;background:#d2ddf5;border-radius:12px;"></div>
<svg style="position:absolute;left:1895px;top:1058px" width="26" height="26" viewBox="0 0 26 26" fill="none" stroke="#2351c8" stroke-width="2.2" stroke-linecap="round" stroke-linejoin="round"><path d="M20.5 8.5 A9 9 0 1 0 22 13"/><path d="M21.5 3.5 V9 H16"/></svg>
<div style="position:absolute;left:1939.00px;top:1053.93px;font-size:25px;line-height:32px;font-family:'Liberation Sans', sans-serif;font-weight:400;color:#2351c8;white-space:pre;-webkit-text-stroke:0.3px #2351c8;letter-spacing:0.058px;">Restart</div>
<div style="position:absolute;left:690px;top:1125px;width:2600px;height:52px;box-sizing:border-box;border:2px dashed #d0d4da;border-radius:12px;"></div>
<svg style="position:absolute;left:1794px;top:1139px" width="26" height="26" viewBox="0 0 26 26" fill="none" stroke="#1d2025" stroke-width="2.4"><path d="M13 2 V24"/><path d="M2 13 H24"/></svg>
<div style="position:absolute;left:1840.00px;top:1133.84px;font-size:27px;line-height:34px;font-family:'Liberation Sans', sans-serif;font-weight:400;color:#1d2025;white-space:pre;-webkit-text-stroke:0.55px #1d2025;letter-spacing:0.370px;">Add a watch expression</div>
<div style="position:absolute;left:750px;top:1199px;width:36px;height:36px;border-radius:18px;background:#9188f1;"></div>
<div style="position:absolute;left:757.50px;top:1201.87px;font-size:22px;line-height:28px;font-family:'Liberation Sans', sans-serif;font-weight:700;color:#ffffff;white-space:pre;letter-spacing:0.234px;">W</div>
<div style="position:absolute;left:799.40px;top:1197.64px;font-size:27px;line-height:34px;font-family:'Liberation Sans', sans-serif;font-weight:400;color:#62656c;white-space:pre;-webkit-text-stroke:0.55px #62656c;letter-spacing:0.266px;">Watched Expression</div>
<div style="position:absolute;left:803.30px;top:1249.44px;font-size:27px;line-height:34px;font-family:'Liberation Sans', sans-serif;font-weight:400;color:#b5b8bd;white-space:pre;letter-spacing:0.207px;">No watched expressions</div>
<svg style="position:absolute;left:709px;top:1304px" width="26" height="20" viewBox="0 0 26 20" fill="none" stroke="#60636a" stroke-width="2.6" stroke-linecap="round" stroke-linejoin="round"><path d="M4 4 L13 14 L22 4"/></svg>
<div style="position:absolute;left:750px;top:1295px;width:36px;height:36px;border-radius:18px;background:#f3c066;"></div>
<div style="position:absolute;left:763.00px;top:1300.22px;font-size:21px;line-height:27px;font-family:'Liberation Sans', sans-serif;font-weight:700;color:#ffffff;white-space:pre;letter-spacing:0.172px;">L</div>
<div style="position:absolute;left:799.00px;top:1293.34px;font-size:27px;line-height:34px;font-family:'Liberation Sans', sans-serif;font-weight:400;color:#62656c;white-space:pre;-webkit-text-stroke:0.55px #62656c;letter-spacing:0.666px;">Local</div>
<div style="position:absolute;left:802.00px;top:1346.14px;font-size:27px;line-height:34px;font-family:'Liberation Sans', sans-serif;font-weight:400;color:#9a2418;white-space:pre;letter-spacing:0.090px;">_firstAmountInNoFees</div>
<div style="position:absolute;left:1091.60px;top:1346.14px;font-size:27px;line-height:34px;font-family:'Liberation Sans', sans-serif;font-weight:400;color:#1c2a3f;white-space:pre;letter-spacing:-2.266px;">=</div>
<div style="position:absolute;left:1123.00px;top:1346.14px;font-size:27px;line-height:34px;font-family:'Liberation Sans', sans-serif;font-weight:400;color:#63666d;white-space:pre;letter-spacing:-0.489px;">1000700490343240268</div>
<div style="position:absolute;left:1418.00px;top:1346.14px;font-size:27px;line-height:34px;font-family:'Liberation Sans', sans-serif;font-weight:400;color:#b4b7bd;white-space:pre;letter-spacing:-0.227px;">(uint256)</div>
<div style="position:absolute;left:802.00px;top:1398.14px;font-size:27px;line-height:34px;font-family:'Liberation Sans', sans-serif;font-weight:400;color:#9a2418;white-space:pre;letter-spacing:-0.153px;">_amountInWithFees</div>
<div style="position:absolute;left:1060.00px;top:1398.14px;font-size:27px;line-height:34px;font-family:'Liberation Sans', sans-serif;font-weight:400;color:#1c2a3f;white-space:pre;letter-spacing:-2.266px;">=</div>
<div style="position:absolute;left:1091.60px;top:1398.14px;font-size:27px;line-height:34px;font-family:'Liberation Sans', sans-serif;font-weight:400;color:#63666d;white-space:pre;letter-spacing:-0.574px;">2396225535360934371</div>
<div style="position:absolute;left:1386.70px;top:1398.14px;font-size:27px;line-height:34px;font-family:'Liberation Sans', sans-serif;font-weight:400;color:#b4b7bd;white-space:pre;letter-spacing:-0.305px;">(uint256)</div>
<div style="position:absolute;left:802.00px;top:1450.14px;font-size:27px;line-height:34px;font-family:'Liberation Sans', sans-serif;font-weight:400;color:#9a2418;white-space:pre;letter-spacing:0.196px;">_firstAmountIn</div>
<div style="position:absolute;left:999.00px;top:1450.14px;font-size:27px;line-height:34px;font-family:'Liberation Sans', sans-serif;font-weight:400;color:#1c2a3f;white-space:pre;letter-spacing:-2.266px;">=</div>
<div style="position:absolute;left:1030.60px;top:1450.14px;font-size:27px;line-height:34px;font-family:'Liberation Sans', sans-serif;font-weight:400;color:#63666d;white-space:pre;letter-spacing:-0.521px;">1000000000000000000</div>
<div style="position:absolute;left:1324.00px;top:1450.14px;font-size:27px;line-height:34px;font-family:'Liberation Sans', sans-serif;font-weight:400;color:#b4b7bd;white-space:pre;letter-spacing:-0.172px;">(uint256)</div>
<div style="position:absolute;left:802.00px;top:1502.14px;font-size:27px;line-height:34px;font-family:'Liberation Sans', sans-serif;font-weight:400;color:#9a2418;white-space:pre;letter-spacing:-0.209px;">_amountIn</div>
<div style="position:absolute;left:947.50px;top:1502.14px;font-size:27px;line-height:34px;font-family:'Liberation Sans', sans-serif;font-weight:400;color:#1c2a3f;white-space:pre;letter-spacing:-2.266px;">=</div>
<div style="position:absolute;left:979.50px;top:1502.14px;font-size:27px;line-height:34px;font-family:'Liberation Sans', sans-serif;font-weight:400;color:#63666d;white-space:pre;letter-spacing:-0.526px;">2397904068208680448</div>
<div style="position:absolute;left:1273.60px;top:1502.14px;font-size:27px;line-height:34px;font-family:'Liberation Sans', sans-serif;font-weight:400;color:#b4b7bd;white-space:pre;letter-spacing:-0.305px;">(uint256)</div>
<div style="position:absolute;left:802.00px;top:1554.14px;font-size:27px;line-height:34px;font-family:'Liberation Sans', sans-serif;font-weight:400;color:#9a2418;white-space:pre;letter-spacing:-0.055px;">_reserveIn</div>
<div style="position:absolute;left:948.50px;top:1554.14px;font-size:27px;line-height:34px;font-family:'Liberation Sans', sans-serif;font-weight:400;color:#1c2a3f;white-space:pre;letter-spacing:-2.266px;">=</div>
<div style="position:absolute;left:980.00px;top:1554.14px;font-size:27px;line-height:34px;font-family:'Liberation Sans', sans-serif;font-weight:400;color:#63666d;white-space:pre;letter-spacing:-0.516px;">1222940580717317782143</div>
<div style="position:absolute;left:1318.00px;top:1554.14px;font-size:27px;line-height:34px;font-family:'Liberation Sans', sans-serif;font-weight:400;color:#b4b7bd;white-space:pre;letter-spacing:-0.283px;">(uint256)</div>
<div style="position:absolute;left:802.00px;top:1606.14px;font-size:27px;line-height:34px;font-family:'Liberation Sans', sans-serif;font-weight:400;color:#9a2418;white-space:pre;letter-spacing:-0.050px;">_reserveOut</div>
<div style="position:absolute;left:969.50px;top:1606.14px;font-size:27px;line-height:34px;font-family:'Liberation Sans', sans-serif;font-weight:400;color:#1c2a3f;white-space:pre;letter-spacing:-2.266px;">=</div>
<div style="position:absolute;left:1004.00px;top:1606.14px;font-size:27px;line-height:34px;font-family:'Liberation Sans', sans-serif;font-weight:400;color:#63666d;white-space:pre;letter-spacing:1.068px;">421818724086198014105482</div>
<div style="position:absolute;left:1413.00px;top:1606.14px;font-size:27px;line-height:34px;font-family:'Liberation Sans', sans-serif;font-weight:400;color:#b4b7bd;white-space:pre;letter-spacing:-0.283px;">(uint256)</div>
<svg style="position:absolute;left:0;top:0" width="2334" height="1616" viewBox="0 0 2334 1616"><polygon points="1550.5,820.6 625.4,1240.7 622.3,1222.3 589.2,1272.9 649.3,1280.3 637.2,1266.1 1555.5,831.4" fill="#e63f26" stroke="#e63f26" stroke-width="1" stroke-linejoin="round"/><circle cx="1553.0" cy="826.0" r="6" fill="#e63f26"/></svg>
</body></html>
